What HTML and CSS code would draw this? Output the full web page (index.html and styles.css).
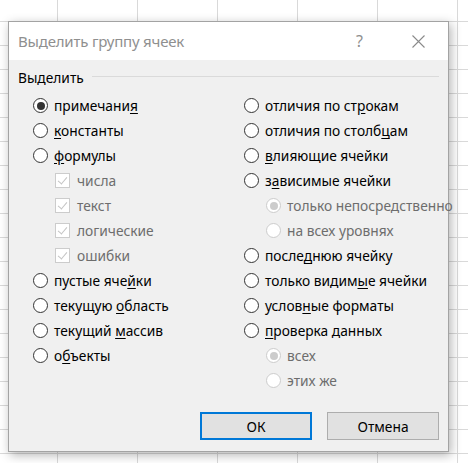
FILE: index.html
```html
<!DOCTYPE html>
<html lang="ru">
  <head>
    <meta charset="UTF-8" />
    <title>Выделить группу ячеек</title>
    <link rel="stylesheet" href="styles.css">
  </head>
  <body>
    <div class="dialog">
      <div class="titlebar">
        <span class="title">Выделить группу ячеек</span>
        <span class="help">?</span>
        <span class="close">
          <svg width="13" height="13" viewBox="0 0 13 13">
            <path d="M0.5 0.5 L12.5 12.5 M12.5 0.5 L0.5 12.5" stroke="#8a8a8a" stroke-width="1.1" fill="none" />
          </svg>
        </span>
      </div>

      <div class="content">
        <div class="legend">
          <span>Выделить</span>
          <div class="rule"></div>
        </div>

        <div class="columns">
          <!-- left column -->
          <div class="col">
            <div class="row"><span class="radio checked"></span><span>примечани<u>я</u></span></div>
            <div class="row"><span class="radio"></span><span><u>к</u>онстанты</span></div>
            <div class="row"><span class="radio"></span><span><u>ф</u>ормулы</span></div>
            <div class="row sub off"><span class="check"></span><span>числа</span></div>
            <div class="row sub off"><span class="check"></span><span>текст</span></div>
            <div class="row sub off"><span class="check"></span><span>логические</span></div>
            <div class="row sub off"><span class="check"></span><span>ошибки</span></div>
            <div class="row"><span class="radio"></span><span>пустые яче<u>й</u>ки</span></div>
            <div class="row"><span class="radio"></span><span>текущую <u>о</u>бласть</span></div>
            <div class="row"><span class="radio"></span><span>текущий <u>м</u>ассив</span></div>
            <div class="row"><span class="radio"></span><span>о<u>б</u>ъекты</span></div>
          </div>

          <!-- right column -->
          <div class="col">
            <div class="row"><span class="radio"></span><span>отличия по ст<u>р</u>окам</span></div>
            <div class="row"><span class="radio"></span><span>отличия по столб<u>ц</u>ам</span></div>
            <div class="row"><span class="radio"></span><span><u>в</u>лияющие ячейки</span></div>
            <div class="row"><span class="radio"></span><span>з<u>а</u>висимые ячейки</span></div>
            <div class="row sub off"><span class="radio checked"></span><span>только непосредственно</span></div>
            <div class="row sub off"><span class="radio"></span><span>на всех уровнях</span></div>
            <div class="row"><span class="radio"></span><span>после<u>д</u>нюю ячейку</span></div>
            <div class="row"><span class="radio"></span><span>только видим<u>ы</u>е ячейки</span></div>
            <div class="row"><span class="radio"></span><span>услов<u>н</u>ые форматы</span></div>
            <div class="row"><span class="radio"></span><span><u>п</u>роверка данных</span></div>
            <div class="row sub off"><span class="radio checked"></span><span>всех</span></div>
            <div class="row sub off"><span class="radio"></span><span>этих же</span></div>
          </div>
        </div>

        <div class="buttons">
          <button class="btn default">ОК</button>
          <button class="btn">Отмена</button>
        </div>
      </div>
    </div>
  </body>
</html>
```

FILE: styles.css
```css
body {
  margin: 0;
  width: 468px;
  height: 463px;
  overflow: hidden;
  background-color: #ffffff;
  background-image: linear-gradient(to right, #d9d9d9 1px, transparent 1px),
    linear-gradient(to bottom, #d9d9d9 1px, transparent 1px);
  background-size: 80px 24px;
  background-position: 57px 21px;
  font-family: "Noto Sans", "Open Sans", sans-serif;
}

.dialog {
  margin-left: 8px;
  margin-top: 21px;
  width: 441px;
  height: 431px;
  box-sizing: border-box;
  border: 1px solid #a3a3a3;
  box-shadow: 2px 3px 10px rgba(0, 0, 0, 0.3);
  display: flex;
  flex-direction: column;
  background-color: #f0f0f0;
}

.titlebar {
  height: 38px;
  background-color: #ffffff;
  display: flex;
  align-items: center;
  padding-left: 9px;
}

.title {
  font-size: 15px;
  letter-spacing: -0.2px;
  color: #8f8f8f;
  flex: 1;
}

.help {
  font-size: 16px;
  color: #8f8f8f;
  width: 14px;
  margin-right: 42px;
}

.close {
  display: flex;
  margin-right: 23px;
}

.content {
  flex: 1;
  display: flex;
  flex-direction: column;
  padding: 10px 9px 11px 9px;
}

.legend {
  display: flex;
  align-items: center;
  gap: 8px;
  font-size: 13.75px;
  line-height: 16px;
  color: #000;
}

.rule {
  flex: 1;
  height: 1px;
  background-color: #dadada;
  margin-top: -3px;
}

.columns {
  display: grid;
  grid-template-columns: 211px 1fr;
  margin-top: 7px;
  padding-left: 15px;
}

.row {
  height: 25px;
  display: flex;
  align-items: center;
  font-size: 13.75px;
  color: #000;
  white-space: nowrap;
}

.row u {
  text-underline-offset: 2px;
}

.sub {
  padding-left: 22px;
}

.off {
  color: #6d6d6d;
}

.radio {
  flex-shrink: 0;
  width: 15px;
  height: 15px;
  box-sizing: border-box;
  border: 1.5px solid #333333;
  border-radius: 50%;
  background-color: #ffffff;
  margin-right: 6px;
  display: flex;
  align-items: center;
  justify-content: center;
}

.radio.checked::after {
  content: "";
  width: 8px;
  height: 8px;
  border-radius: 50%;
  background-color: #333333;
}

.off .radio {
  border-color: #cccccc;
}

.off .radio.checked::after {
  background-color: #cccccc;
}

.check {
  flex-shrink: 0;
  width: 15px;
  height: 15px;
  box-sizing: border-box;
  border: 1px solid #cccccc;
  background-color: #ffffff;
  margin-right: 7px;
  position: relative;
}

.check::after {
  content: "";
  position: absolute;
  left: 4px;
  top: 1px;
  width: 4px;
  height: 8px;
  border-right: 1px solid #c4c4c4;
  border-bottom: 1px solid #c4c4c4;
  transform: rotate(40deg);
}

.buttons {
  margin-top: auto;
  display: flex;
  justify-content: flex-end;
  gap: 15px;
}

.btn {
  width: 112px;
  height: 28px;
  box-sizing: border-box;
  background-color: #e1e1e1;
  border: 1px solid #adadad;
  font-family: "Noto Sans", "Open Sans", sans-serif;
  font-size: 13.75px;
  color: #000;
  padding: 0;
}

.btn.default {
  border: 2px solid #0078d7;
}
```
